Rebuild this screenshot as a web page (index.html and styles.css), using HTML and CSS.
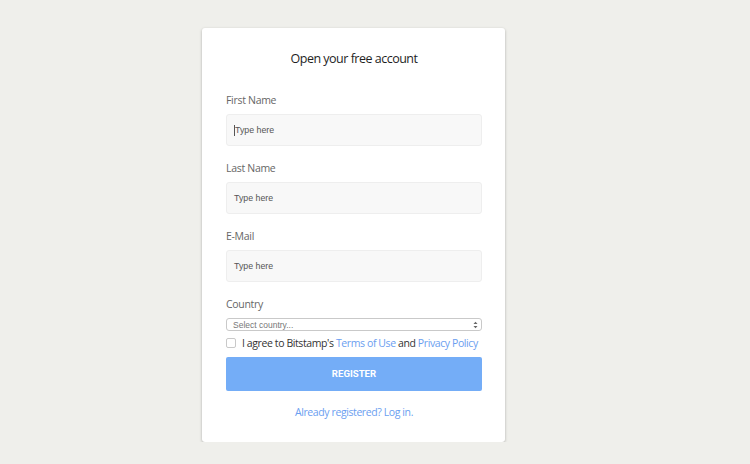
FILE: index.html
```html
<!DOCTYPE html>
<html>
  <head>
  <link rel="stylesheet" href="styles.css">
  </head>
  <body>
  <div class="page">
    <div class="card">
      <h3 class="title">Open your free account</h3>

      <div class="field">
        <label class="label">First Name</label>
        <div class="input"><span class="caret"></span>Type here</div>
      </div>
      <div class="field">
        <label class="label">Last Name</label>
        <div class="input">Type here</div>
      </div>
      <div class="field">
        <label class="label">E-Mail</label>
        <div class="input">Type here</div>
      </div>

      <div class="field country">
        <label class="label">Country</label>
        <div class="select">
          <span>Select country...</span>
          <svg class="arrows" width="5" height="8" viewBox="0 0 5 8">
            <path d="M0.5 3 L2.5 0.8 L4.5 3 Z" fill="#666"/>
            <path d="M0.5 5 L2.5 7.2 L4.5 5 Z" fill="#666"/>
          </svg>
        </div>
      </div>

      <div class="agree">
        <span class="check"></span>
        <span>I agree to Bitstamp's <a class="link">Terms of Use</a> and <a class="link">Privacy Policy</a></span>
      </div>

      <div class="button">REGISTER</div>

      <div class="login"><a class="link">Already registered? Log in.</a></div>
    </div>
  </div>
  </body>
</html>
```

FILE: styles.css
```css
body {
  margin: 0;
  background: #efefeb;
  font-family: "Open Sans", "Liberation Sans", sans-serif;
}
.page {
  padding: 28px 0 0 202px;
}
.card {
  width: 256px;
  height: 370px;
  padding: 22px 23px 22px 24px;
  background: #fff;
  border-radius: 3px;
  box-shadow: 0 1px 3px rgba(0, 0, 0, 0.28);
}
.title {
  margin: 0 0 24px 0;
  text-align: center;
  font-size: 12.5px;
  letter-spacing: -0.5px;
  font-weight: 400;
  line-height: 18px;
  color: #1e1e1e;
}
.field {
  margin-bottom: 14px;
}
.label {
  display: block;
  font-size: 10.5px;
  letter-spacing: -0.3px;
  line-height: 16px;
  color: #666;
  margin-bottom: 6px;
}
.input {
  box-sizing: border-box;
  height: 32px;
  padding: 0 7px;
  display: flex;
  align-items: center;
  background: #f8f8f8;
  border: 1px solid #eeeeee;
  border-radius: 3px;
  font-family: "Liberation Sans", Arial, sans-serif;
  font-size: 8.8px;
  color: #555;
}
.caret {
  width: 1px;
  height: 11px;
  background: #555;
}
.country {
  margin-bottom: 4px;
}
.select {
  position: relative;
  box-sizing: border-box;
  height: 13px;
  padding: 0 6px;
  display: flex;
  align-items: center;
  border: 1px solid #c9c9c9;
  border-radius: 3px;
  font-family: "Liberation Sans", Arial, sans-serif;
  font-size: 8.5px;
  color: #777;
}
.arrows {
  position: absolute;
  right: 3px;
  top: 1.5px;
}
.agree {
  display: flex;
  align-items: center;
  white-space: nowrap;
  font-size: 10.5px;
  letter-spacing: -0.4px;
  line-height: 16px;
  color: #333;
}
.check {
  box-sizing: border-box;
  width: 10px;
  height: 10px;
  border: 1px solid #c9c9c9;
  border-radius: 2px;
  margin: 0 6px 0 0;
}
.link {
  color: #6a9ef0;
  text-decoration: none;
}
.button {
  margin-top: 6px;
  height: 34px;
  line-height: 34px;
  text-align: center;
  background: #74adf7;
  border-radius: 2px;
  color: #fff;
  font-family: Roboto, "Liberation Sans", sans-serif;
  font-weight: 700;
  font-size: 9.6px;
}
.login {
  margin-top: 13px;
  text-align: center;
  font-size: 10.5px;
  letter-spacing: -0.4px;
  line-height: 16px;
}
```
